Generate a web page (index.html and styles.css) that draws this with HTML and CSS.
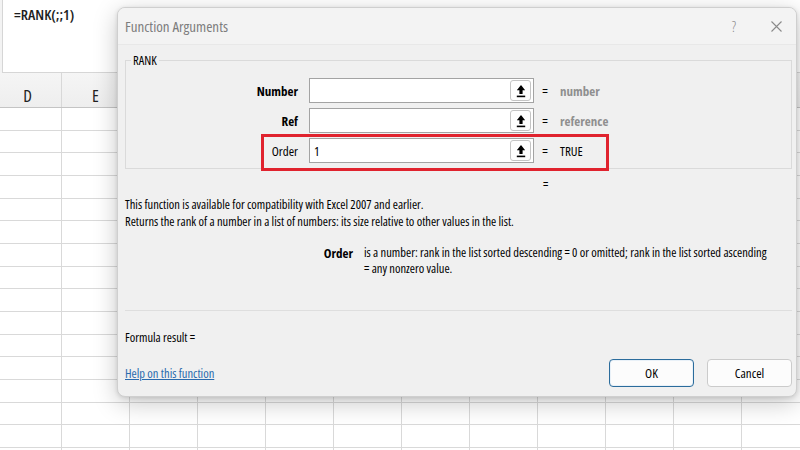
FILE: index.html
```html
<!DOCTYPE html>
<html>
<head>
<meta charset="utf-8">
<link rel="stylesheet" href="styles.css">
</head>
<body>
<div class="sheet">
  <div class="formula-bar"><span class="formula">=RANK(;;1)</span></div>
  <div class="col-headers">
    <div class="col-head first">D</div>
    <div class="col-head">E</div>
    <div class="col-head"></div>
  </div>
  <div class="grid"></div>
</div>

<div class="dialog">
  <div class="titlebar">
    <span class="title">Function Arguments</span>
    <div class="title-btns">
      <span class="help">?</span>
      <svg class="close" width="11" height="11" viewBox="0 0 11 11"><path d="M0.5 0.5 L10.5 10.5 M10.5 0.5 L0.5 10.5" stroke="#8a8a8a" stroke-width="1.1" fill="none"/></svg>
    </div>
  </div>
  <div class="body">
    <div class="group">
      <span class="legend">RANK</span>
      <div class="arg-row">
        <span class="arg-label bold">Number</span>
        <div class="arg-input"><span class="arg-text"></span><span class="ref-btn"><svg width="10" height="14" viewBox="0 0 10 14"><path d="M5 1 L9.2 6.2 L6.6 6.2 L6.6 10 L3.4 10 L3.4 6.2 L0.8 6.2 Z" fill="#000"/><rect x="0.8" y="11.6" width="8.4" height="1.6" fill="#000"/></svg></span></div>
        <span class="eq">=</span>
        <span class="arg-value muted">number</span>
      </div>
      <div class="arg-row">
        <span class="arg-label bold">Ref</span>
        <div class="arg-input"><span class="arg-text"></span><span class="ref-btn"><svg width="10" height="14" viewBox="0 0 10 14"><path d="M5 1 L9.2 6.2 L6.6 6.2 L6.6 10 L3.4 10 L3.4 6.2 L0.8 6.2 Z" fill="#000"/><rect x="0.8" y="11.6" width="8.4" height="1.6" fill="#000"/></svg></span></div>
        <span class="eq">=</span>
        <span class="arg-value muted">reference</span>
      </div>
      <div class="arg-row">
        <span class="arg-label">Order</span>
        <div class="arg-input"><span class="arg-text">1</span><span class="ref-btn"><svg width="10" height="14" viewBox="0 0 10 14"><path d="M5 1 L9.2 6.2 L6.6 6.2 L6.6 10 L3.4 10 L3.4 6.2 L0.8 6.2 Z" fill="#000"/><rect x="0.8" y="11.6" width="8.4" height="1.6" fill="#000"/></svg></span></div>
        <span class="eq">=</span>
        <span class="arg-value plain">TRUE</span>
      </div>
      <div class="highlight"></div>
    </div>
    <div class="result-eq">=</div>
    <div class="desc">
      <div>This function is available for compatibility with Excel 2007 and earlier.</div>
      <div>Returns the rank of a number in a list of numbers: its size relative to other values in the list.</div>
    </div>
    <div class="param">
      <span class="param-name">Order</span>
      <span class="param-text">is a number: rank in the list sorted descending = 0 or omitted; rank in the list sorted ascending<br>= any nonzero value.</span>
    </div>
    <div class="separator"></div>
    <div class="formula-result">Formula result =</div>
    <div class="footer">
      <a class="help-link" href="#">Help on this function</a>
      <div class="buttons">
        <button class="btn ok">OK</button>
        <button class="btn">Cancel</button>
      </div>
    </div>
  </div>
</div>
</body>
</html>
```

FILE: styles.css
```css
html, body {
  margin: 0;
  padding: 0;
}
body {
  width: 800px;
  height: 450px;
  overflow: hidden;
  position: relative;
  background: #ffffff;
  font-family: "Open Sans", "Liberation Sans", sans-serif;
  font-stretch: 75%;
  color: #000;
}
.sheet {
  display: flex;
  flex-direction: column;
  height: 450px;
  background: #f3f3f3;
}
.formula-bar {
  height: 73px;
  box-sizing: border-box;
  margin-left: 2px;
  border-left: 1px solid #d6d6d6;
  border-bottom: 1px solid #d6d6d6;
  background: #fff;
  padding: 3px 0 0 11px;
}
.formula {
  font-size: 15px;
  font-weight: 600;
  color: #1e1e1e;
}
.col-headers {
  display: flex;
  height: 34px;
  margin-left: -6px;
  background: linear-gradient(#f5f5f5, #eeeeee);
  border-bottom: 1px solid #c4c4c4;
}
.col-head {
  width: 68px;
  flex: none;
  display: flex;
  align-items: center;
  justify-content: center;
  font-size: 17px;
  color: #222;
  border-right: 1px solid #d8d8d8;
  box-sizing: border-box;
  padding-top: 11px;
}
.grid {
  flex: 1;
  background-color: #fff;
  background-image:
    repeating-linear-gradient(to bottom, transparent 0, transparent 21.67px, #d9d9d9 21.67px, #d9d9d9 22.67px),
    repeating-linear-gradient(to right, transparent 0, transparent 67px, #d9d9d9 67px, #d9d9d9 68px);
  background-position: 0 0, -6px 0;
}

.dialog {
  position: absolute;
  left: 117px;
  top: 7px;
  width: 680px;
  height: 390px;
  box-sizing: border-box;
  background: #f0f0f0;
  border: 1px solid #cfcfcf;
  border-radius: 8px;
  box-shadow: 0 6px 24px rgba(0, 0, 0, 0.22), 0 1px 4px rgba(0, 0, 0, 0.12);
  display: flex;
  flex-direction: column;
  overflow: hidden;
}
.titlebar {
  height: 36px;
  flex: none;
  display: flex;
  align-items: center;
  justify-content: space-between;
  background: #f3f3f3;
  border-bottom: 1px solid #e8e8e8;
  padding: 0 14px 0 7px;
}
.title {
  font-size: 15px;
  color: #7d7d7d;
}
.title-btns {
  display: flex;
  align-items: center;
  gap: 35px;
}
.help {
  font-size: 15px;
  color: #8a8a8a;
  font-weight: 300;
}
.body {
  flex: 1;
  padding: 15px 4px 0 6px;
  font-size: 12.5px;
  display: flex;
  flex-direction: column;
}
.group {
  position: relative;
  border: 1px solid #dadada;
  margin-left: 1px;
  padding: 17px 0 5px 0;
  display: flex;
  flex-direction: column;
  gap: 5px;
}
.legend {
  position: absolute;
  left: 5px;
  top: -8px;
  padding: 0 2px;
  background: #f0f0f0;
  font-size: 12.5px;
  line-height: 16px;
}
.arg-row {
  display: grid;
  grid-template-columns: 183px 225px 22px auto;
  height: 25px;
  align-items: center;
}
.arg-label {
  text-align: right;
  padding-right: 11px;
  font-size: 13px;
}
.bold {
  font-weight: bold;
}
.arg-input {
  width: 225px;
  height: 25px;
  box-sizing: border-box;
  border: 1px solid #a3a3a3;
  background: #fff;
  display: flex;
  align-items: center;
  justify-content: space-between;
  padding: 0 2px 0 4px;
}
.arg-text {
  font-size: 13px;
}
.ref-btn {
  width: 21px;
  height: 21px;
  box-sizing: border-box;
  border: 1px solid #c4c4c4;
  border-radius: 3px;
  background: #fdfdfd;
  display: flex;
  align-items: center;
  justify-content: center;
}
.eq {
  text-align: center;
  font-size: 13px;
}
.arg-value {
  padding-left: 4px;
  font-size: 13px;
}
.muted {
  color: #8f8f8f;
  font-weight: bold;
}
.highlight {
  position: absolute;
  left: 135px;
  top: 73px;
  width: 348px;
  height: 37px;
  box-sizing: border-box;
  border: 3px solid #e0232e;
}
.result-eq {
  margin-top: 7px;
  padding-left: 419px;
  line-height: 17px;
}
.desc {
  margin-top: 3px;
  line-height: 17px;
  padding-left: 1px;
}
.param {
  margin-top: 15px;
  display: grid;
  grid-template-columns: 229px 1fr;
  column-gap: 11px;
  line-height: 16px;
}
.param-name {
  text-align: right;
  font-weight: bold;
  font-size: 13px;
}
.separator {
  margin-top: 33px;
  height: 0;
  border-top: 1px solid #dedede;
  margin-left: 1px;
}
.formula-result {
  margin-top: 18px;
  line-height: 17px;
  padding-left: 1px;
}
.footer {
  margin-top: 13px;
  display: flex;
  justify-content: space-between;
  align-items: center;
  padding-left: 1px;
}
.help-link {
  color: #2a6aad;
  text-decoration: underline;
}
.buttons {
  display: flex;
  gap: 13px;
}
.btn {
  width: 85px;
  height: 28px;
  box-sizing: border-box;
  border: 1px solid #cbcbcb;
  border-radius: 4px;
  background: #fcfcfc;
  font-family: inherit;
  font-stretch: 75%;
  font-size: 13px;
  color: #000;
  padding: 0;
}
.btn.ok {
  border: 1px solid #2b6c9c;
  box-shadow: inset 0 0 0 1px #e9f1f8;
}
```
